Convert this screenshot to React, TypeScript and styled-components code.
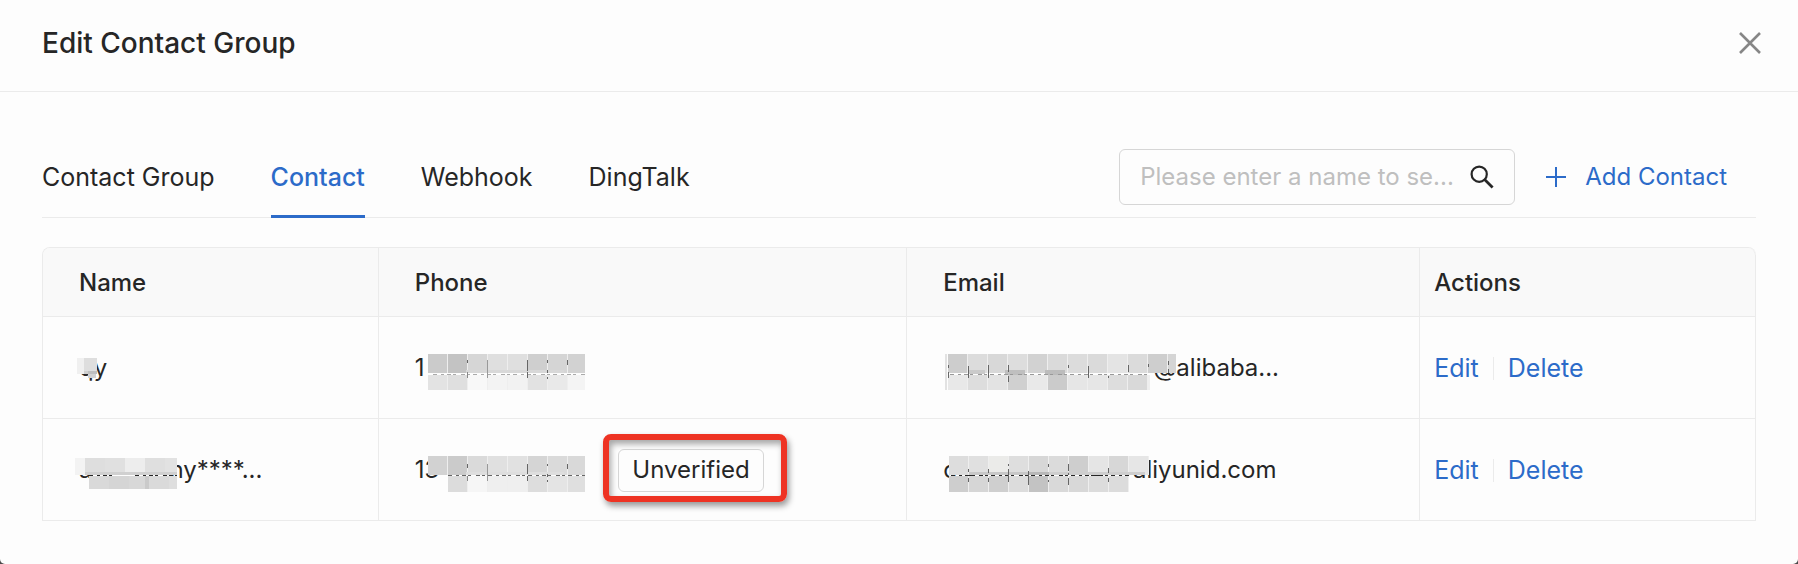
import React, { useState } from "react";
import styled, { createGlobalStyle } from "styled-components";

const blue = "#2c6bc9";
const ink = "#262626";
const line = "#ebebeb";

const GlobalStyle = createGlobalStyle`
  * { box-sizing: border-box; }
  body { margin: 0; background: #4a4a4a; }
  body, button, input { font-family: Inter, "Liberation Sans", sans-serif; font-size: 24px; color: ${ink}; }
`;

const Dialog = styled.main`
  min-height: 100vh;
  background: #fdfdfd;
  border-radius: 0 0 5px 5px;
  line-height: 32px;
`;

const Header = styled.header`
  display: flex;
  align-items: center;
  justify-content: space-between;
  padding: 21px 37px 26px 42px;
  border-bottom: 1px solid ${line};
`;

const Title = styled.h1`
  margin: 0;
  font-size: 28px;
  line-height: 44px;
  font-weight: 500;
`;

const PlainButton = styled.button`
  display: inline-flex;
  align-items: center;
  padding: 0;
  border: 0;
  background: none;
  line-height: 32px;
  cursor: pointer;
`;

const Body = styled.section`
  padding: 57px 42px 42px;
`;

const TabBar = styled.div`
  display: flex;
  justify-content: space-between;
  border-bottom: 1px solid ${line};
`;

const Tabs = styled.div`
  display: flex;
  gap: 56px;
`;

const Tab = styled(PlainButton)<{ $active: boolean }>`
  padding: 1px 0 12px;
  margin-bottom: -1px;
  border-bottom: 3px solid ${(p) => (p.$active ? blue : "transparent")};
  color: ${(p) => (p.$active ? blue : ink)};
  font-size: 25px;
  font-weight: ${(p) => (p.$active ? 500 : 400)};
`;

const Tools = styled.div`
  display: flex;
  align-items: center;
  gap: 30px;
  padding: 0 29px 12px 0;
`;

const SearchBox = styled.label`
  display: flex;
  align-items: center;
  width: 396px;
  height: 56px;
  padding: 0 20px;
  border: 1px solid #d6d6d6;
  border-radius: 6px;
`;

const SearchInput = styled.input`
  flex: 1;
  min-width: 0;
  padding: 0;
  border: 0;
  outline: 0;
  background: none;
  line-height: 32px;
  &::placeholder { color: #bfbfbf; opacity: 1; }
`;

const AddButton = styled(PlainButton)`
  gap: 18px;
  color: ${blue};
`;

const Table = styled.table`
  width: 100%;
  margin-top: 29px;
  table-layout: fixed;
  border-collapse: separate;
  border-spacing: 0;
  border: solid ${line};
  border-width: 1px 0 0 1px;
  border-radius: 8px 8px 0 0;
  overflow: hidden;
`;

const HeadCell = styled.th<{ $width?: string; $tight?: boolean }>`
  width: ${(p) => p.$width ?? "auto"};
  height: 69px;
  padding: 2px 0 0 ${(p) => (p.$tight ? 14 : 36)}px;
  border: solid ${line};
  border-width: 0 1px 1px 0;
  background: #f9f9f9;
  text-align: left;
  font-weight: 500;
  &:last-child { border-top-right-radius: 8px; }
`;

const Cell = styled.td<{ $tight?: boolean }>`
  height: 102px;
  padding: 1px 0 0 ${(p) => (p.$tight ? 14 : 36)}px;
  border: solid ${line};
  border-width: 0 1px 1px 0;
  white-space: nowrap;
`;

const Line = styled.div`
  display: flex;
  align-items: center;
`;

const Masked = styled.span`
  display: inline-flex;
  align-items: center;
  height: 32px;
`;

const Mosaic = styled.svg<{ $lead: number; $tail: number; $drop: number }>`
  position: relative;
  z-index: 1;
  flex: none;
  margin: ${(p) => p.$drop}px ${(p) => -p.$tail}px 0 ${(p) => -p.$lead}px;
`;

const BadgeWrap = styled.span`
  position: relative;
  display: inline-flex;
  margin-left: 33px;
`;

const Badge = styled.button`
  height: 43px;
  padding: 0 13px;
  border: 1px solid #d6d6d6;
  border-radius: 6px;
  background: #fdfdfd;
  line-height: 32px;
`;

const Highlight = styled.span`
  position: absolute;
  inset: -15px -23px -10px -15px;
  border: 6px solid #ee3323;
  border-radius: 8px;
  box-shadow: 2px 4px 6px rgba(0, 0, 0, 0.4), inset 2px 4px 6px rgba(0, 0, 0, 0.35);
  pointer-events: none;
`;

const Action = styled.a`
  color: ${blue};
  font-size: 25px;
  text-decoration: none;
`;

const Divider = styled.span`
  width: 1px;
  height: 23px;
  margin: 0 14px;
  background: ${line};
`;

type Rect = [number, number, number, number, string];

interface MaskData {
  width: number;
  height: number;
  lead: number;
  tail: number;
  drop: number;
  tiles: Rect[];
  marks: Rect[];
}

const dark = "#666";

/* A run of equal tiles, with a light seam between neighbours. */
const run = (x: number, y: number, h: number, end: number, shades: string[]): Rect[] => [
  [x, y, end - x, h, "#eeeeee"],
  ...shades.map((s, i) => {
    const left = x + i * 20;
    return [left, y, Math.min(19, end - left), h, s] as Rect;
  }),
];

/* A row of short dashes, left over where two strips of tiles meet. */
const dashes = (from: number, to: number, y: number, color = "#777"): Rect[] => {
  const out: Rect[] = [];
  for (let x = from, i = 0; x < to; x += i % 3 === 0 ? 8 : 6, i++) out.push([x, y, i % 2 ? 3 : 4, 1, color]);
  return out;
};

const masks: Record<string, MaskData> = {
  name1: {
    width: 20, height: 20, lead: 17, tail: 3, drop: 0,
    tiles: [[0, 0, 7, 16, "#f0f0f0"], [7, 0, 13, 13, "#dedede"], [7, 13, 4, 3, "#d0d0d0"], [11, 13, 9, 3, "#bfbfbf"], [11, 16, 8, 4, "#d2d2d2"]],
    marks: [],
  },
  name2: {
    width: 102, height: 31, lead: 17, tail: 8, drop: 6,
    tiles: [
      [0, 0, 10, 17, "#f3f3f3"], [10, 0, 20, 14, "#dedede"], [30, 0, 20, 14, "#e0e0e0"], [50, 0, 20, 14, "#ededed"],
      [70, 0, 20, 14, "#dfdfdf"], [90, 0, 12, 14, "#e2e2e2"], [10, 14, 92, 3, "#d0d0d0"],
      [14, 18, 20, 13, "#d9d9d9"], [34, 18, 20, 13, "#d5d5d5"], [54, 18, 16, 13, "#d8d8d8"], [70, 18, 4, 13, "#cacaca"],
      [74, 18, 20, 13, "#dadada"], [94, 18, 8, 13, "#dedede"],
    ],
    marks: [...dashes(14, 40, 17, ink), ...dashes(60, 101, 17, ink)],
  },
  phone1: {
    width: 157, height: 36, lead: -3, tail: 0, drop: 7,
    tiles: [
      ...run(0, 0, 19, 157, ["#cbcbcb", "#c3c3c3", "#d6d6d6", "#dfdfdf", "#dfdfdf", "#cfcfcf", "#d5d5d5", "#d2d2d2"]),
      ...run(0, 21, 15, 157, ["#e3e3e3", "#dfdfdf", "#f8f8f8", "#f3f3f3", "#f2f2f2", "#e2e2e2", "#e9e9e9", "#f4f4f4"]),
      [38, 16, 98, 3, "#d8d8d8"],
    ],
    marks: [...dashes(5, 156, 20, "#aaa"), [39, 6, 1, 3, dark], [39, 18, 1, 6, "#888"], [59, 6, 1, 18, "#999"], [99, 6, 1, 11, dark], [99, 18, 1, 6, dark], [119, 6, 1, 3, dark], [119, 16, 1, 3, dark], [119, 23, 1, 2, dark], [139, 6, 1, 5, dark]],
  },
  phone2: {
    width: 157, height: 36, lead: 11, tail: 0, drop: 7,
    tiles: [
      ...run(0, 0, 19, 157, ["#d2d2d2", "#cbcbcb", "#dadada", "#e0e0e0", "#e1e1e1", "#d5d5d5", "#dadada", "#d9d9d9"]),
      ...run(20, 20, 16, 157, ["#dcdcdc", "#f6f6f6", "#efefef", "#efefef", "#dddddd", "#e4e4e4", "#dfdfdf"]),
      [38, 16, 98, 3, "#dedede"],
    ],
    marks: [...dashes(20, 156, 19, dark), [39, 8, 1, 4, dark], [39, 20, 1, 5, "#888"], [59, 8, 1, 17, "#999"], [99, 8, 1, 10, dark], [99, 20, 1, 5, dark], [119, 8, 1, 2, dark], [119, 18, 1, 3, dark], [119, 24, 1, 2, dark], [139, 8, 1, 5, dark]],
  },
  email1: {
    width: 231, height: 36, lead: -2, tail: 23, drop: 7,
    tiles: [
      [0, 0, 2, 36, "#e2e2e2"],
      ...run(3, 0, 19, 231, ["#cdcdcd", "#dcdcdc", "#d8d8d8", "#dddddd", "#d2d2d2", "#dadada", "#dcdcdc", "#dadada", "#e4e4e4", "#dbdbdb", "#cecece", "#d5d5d5"]),
      ...run(3, 21, 15, 205, ["#e8e8e8", "#dddddd", "#e3e3e3", "#d0d0d0", "#e9e9e9", "#cbcbcb", "#e6e6e6", "#e6e6e6", "#dddddd", "#d9d9d9"]),
      [23, 16, 17, 4, "#cacaca"], [60, 16, 20, 5, "#bfbfbf"], [100, 16, 20, 5, "#bcbcbc"],
    ],
    marks: [...dashes(5, 204, 20, "#999"), [3, 11, 1, 3, dark], [3, 18, 1, 6, dark], [23, 12, 1, 12, dark], [43, 11, 1, 13, dark], [63, 11, 1, 7, dark], [63, 22, 1, 6, dark], [123, 11, 1, 3, dark], [143, 12, 1, 12, dark], [163, 22, 1, 2, dark], [183, 11, 1, 7, dark], [203, 10, 1, 3, dark], [223, 7, 1, 4, dark], [223, 15, 1, 4, dark]],
  },
  email2: {
    width: 200, height: 36, lead: 8, tail: 16, drop: 7,
    tiles: [
      ...run(0, 0, 19, 200, ["#dddddd", "#e0e0e0", "#ebebe9", "#dedede", "#d7d7d7", "#dbdbdb", "#cecece", "#e5e5e5", "#d7d7d7", "#e6e6e6"]),
      ...run(0, 20, 16, 180, ["#cecece", "#d6d6d6", "#cfcfcf", "#dcdcdc", "#c3c3c3", "#d9d9d9", "#d8d8d8", "#dcdcdc", "#dcdcdc"]),
      [20, 16, 60, 3, "#c8c8c8"], [80, 16, 20, 3, "#b8b8b8"], [100, 16, 96, 3, "#cecece"],
    ],
    marks: [...dashes(2, 180, 19, ink), [18, 19, 8, 1, ink], [142, 19, 12, 1, ink], [19, 13, 1, 3, dark], [19, 22, 1, 4, dark], [39, 13, 1, 4, dark], [39, 22, 1, 4, dark], [59, 8, 1, 2, dark], [59, 13, 1, 13, dark], [79, 15, 1, 14, dark], [99, 8, 1, 3, dark], [99, 24, 1, 2, dark], [119, 8, 1, 7, dark], [119, 17, 1, 2, dark], [119, 22, 1, 7, dark], [159, 12, 1, 5, dark], [159, 22, 1, 4, dark]],
  },
};

const MaskedText = ({ before = "", mask, after = "" }: { before?: string; mask: string; after?: string }) => {
  const m = masks[mask];
  return (
    <Masked>
      {before && <span>{before}</span>}
      <Mosaic $lead={m.lead} $tail={m.tail} $drop={m.drop} width={m.width} height={m.height} aria-hidden="true" shapeRendering="crispEdges">
        {[...m.tiles, ...m.marks].map(([x, y, w, h, fill], i) => (
          <rect key={i} x={x} y={y} width={w} height={h} fill={fill} />
        ))}
      </Mosaic>
      {after && <span>{after}</span>}
    </Masked>
  );
};

const contacts = [
  { name: { before: "q", mask: "name1", after: "y" }, phone: { before: "1", mask: "phone1" }, email: { mask: "email1", after: "@alibaba..." }, unverified: false },
  { name: { before: "a", mask: "name2", after: "ny****..." }, phone: { before: "13", mask: "phone2" }, email: { before: "c", mask: "email2", after: "aliyunid.com" }, unverified: true },
];

const tabs = ["Contact Group", "Contact", "Webhook", "DingTalk"];

export default function App() {
  const [active, setActive] = useState("Contact");
  return (
    <>
      <GlobalStyle />
      <Dialog role="dialog" aria-labelledby="dialog-title">
        <Header>
          <Title id="dialog-title">Edit Contact Group</Title>
          <PlainButton aria-label="Close">
            <svg width="22" height="22" viewBox="0 0 22 22" fill="none" stroke="#868686" strokeWidth="2.6">
              <path d="M1 1L21 21M21 1L1 21" />
            </svg>
          </PlainButton>
        </Header>
        <Body>
          <TabBar>
            <Tabs role="tablist">
              {tabs.map((t) => (
                <Tab key={t} role="tab" aria-selected={t === active} $active={t === active} onClick={() => setActive(t)}>
                  {t}
                </Tab>
              ))}
            </Tabs>
            <Tools>
              <SearchBox>
                <SearchInput type="text" aria-label="Search contacts" placeholder="Please enter a name to se..." />
                <svg width="24" height="24" viewBox="0 0 24 24" fill="none" stroke={ink} strokeWidth="2.2">
                  <circle cx="9.2" cy="9.2" r="7.6" />
                  <path d="M14.6 14.6L22.6 22.6" strokeWidth="2.8" />
                </svg>
              </SearchBox>
              <AddButton>
                <svg width="22" height="22" viewBox="0 0 22 22" stroke={blue} strokeWidth="2">
                  <path d="M11 1V21M1 11H21" />
                </svg>
                Add Contact
              </AddButton>
            </Tools>
          </TabBar>
          <Table>
            <thead>
              <tr>
                <HeadCell $width="19.6%">Name</HeadCell>
                <HeadCell $width="30.85%">Phone</HeadCell>
                <HeadCell $width="29.95%">Email</HeadCell>
                <HeadCell $tight>Actions</HeadCell>
              </tr>
            </thead>
            <tbody>
              {contacts.map((c, i) => (
                <tr key={i}>
                  <Cell><Line><MaskedText {...c.name} /></Line></Cell>
                  <Cell>
                    <Line>
                      <MaskedText {...c.phone} />
                      {c.unverified && (
                        <BadgeWrap>
                          <Badge>Unverified</Badge>
                          <Highlight />
                        </BadgeWrap>
                      )}
                    </Line>
                  </Cell>
                  <Cell><Line><MaskedText {...c.email} /></Line></Cell>
                  <Cell $tight>
                    <Line>
                      <Action href="#edit">Edit</Action>
                      <Divider />
                      <Action href="#delete">Delete</Action>
                    </Line>
                  </Cell>
                </tr>
              ))}
            </tbody>
          </Table>
        </Body>
      </Dialog>
    </>
  );
}
